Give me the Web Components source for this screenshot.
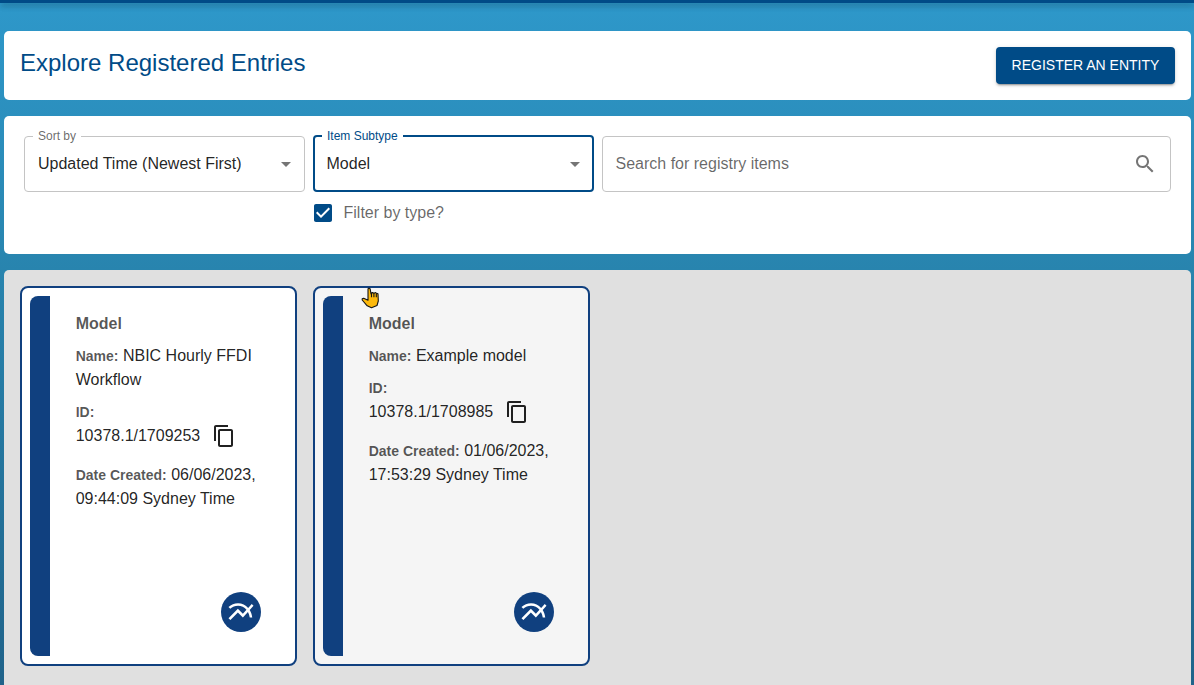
<!DOCTYPE html>
<html lang="en">
<head>
<meta charset="utf-8">
<title>Explore Registered Entries</title>
<style>
  html, body { margin: 0; height: 100%; overflow: hidden; }
  body { font: 16px/24px "Liberation Sans", Arial, sans-serif; color: rgba(0,0,0,.87); }
</style>
</head>
<body>
<registry-page>
  <page-heading heading="Explore Registered Entries" action="REGISTER AN ENTITY"></page-heading>
  <filter-panel>
    <outlined-field label="Sort by">Updated Time (Newest First)</outlined-field>
    <div>
      <outlined-field label="Item Subtype" focused>Model</outlined-field>
      <check-option>Filter by type?</check-option>
    </div>
    <outlined-field search>Search for registry items</outlined-field>
  </filter-panel>
  <result-grid>
    <entry-card kind="Model" name="NBIC Hourly FFDI Workflow" handle="10378.1/1709253" created="06/06/2023, 09:44:09 Sydney Time"></entry-card>
    <entry-card hovered kind="Model" name="Example model" handle="10378.1/1708985" created="01/06/2023, 17:53:29 Sydney Time"></entry-card>
  </result-grid>
</registry-page>
<hand-pointer></hand-pointer>
<script>
function define(tag, render) {
  customElements.define(tag, class extends HTMLElement {
    connectedCallback() {
      if (this.shadowRoot) return;
      const t = document.createElement('template');
      t.innerHTML = render(this);
      this.attachShadow({ mode: 'open' }).append(t.content.cloneNode(true));
    }
  });
}

define('registry-page', () => `
<style>
  :host { display: flex; flex-direction: column; height: 100vh; box-sizing: border-box; overflow: hidden;
    background: linear-gradient(#2e98ca 0, #2884ae 270px, #20638a 685px); }
  .bar { flex: none; height: 3px; background: #004b87;
    box-shadow: 0 2px 4px -1px rgba(0,0,0,.2), 0 4px 5px rgba(0,0,0,.14), 0 1px 10px rgba(0,0,0,.12); }
  main { display: flex; flex-direction: column; gap: 16px; padding: 28px 3px 0 4px; flex: 1; }
</style>
<div class="bar"></div><main><slot></slot></main>`);

define('page-heading', el => `
<style>
  :host { display: flex; justify-content: space-between; align-items: flex-start; height: 69px;
    box-sizing: border-box; padding: 16px; background: #fff; border-radius: 5px; flex: none; }
  h1 { margin: 0; font-size: 24px; line-height: 32px; font-weight: 400; color: #004b87; }
  button { font: 14px/24.5px "Liberation Sans", Arial, sans-serif; color: #fff; background: #004b87; border: 0;
    border-radius: 4px; width: 179px; height: 37px; padding: 0;
    box-shadow: 0 3px 1px -2px rgba(0,0,0,.2), 0 2px 2px rgba(0,0,0,.14), 0 1px 5px rgba(0,0,0,.12); }
</style>
<h1>${el.getAttribute('heading')}</h1><button>${el.getAttribute('action')}</button>`);

define('filter-panel', () => `
<style>
  :host { display: grid; grid-template-columns: 281px 281px 569px; column-gap: 8px; align-items: start;
    height: 138px; box-sizing: border-box; padding: 20px; background: #fff; border-radius: 5px; flex: none; }
</style><slot></slot>`);

define('outlined-field', el => {
  const label = el.getAttribute('label');
  const search = el.hasAttribute('search');
  return `
<style>
  :host { display: flex; align-items: center; box-sizing: border-box; height: 56px; position: relative;
    padding: 0 14px; justify-content: space-between; }
  :host([search]) { color: rgba(0,0,0,.6); }
  :host([search]), :host([focused]) { padding-left: 13.5px; }
  fieldset { position: absolute; inset: 0; margin: 0; padding: 0; border: 1px solid #c4c4c4; border-radius: 4px; }
  :host([focused]) fieldset { border: 2px solid #004b87; top: -1px; }
  label { position: absolute; left: 9px; top: -8px; padding: 0 5px; font-size: 12px; line-height: 16px;
    background: #fff; color: rgba(0,0,0,.6); }
  :host([focused]) label { color: #004b87; }
  svg { width: 24px; height: 24px; fill: #757575; position: relative; margin-right: -7px; }
  :host([search]) svg { margin-right: 0; }
</style>
<fieldset></fieldset>${label ? `<label>${label}</label>` : ''}<span><slot></slot></span>
<svg viewBox="0 0 24 24"><path d="${search
  ? 'M15.5 14h-.79l-.28-.27C15.41 12.59 16 11.11 16 9.5 16 5.91 13.09 3 9.5 3S3 5.91 3 9.5 5.91 16 9.5 16c1.61 0 3.09-.59 4.23-1.57l.27.28v.79l5 4.99L20.49 19l-4.99-5zm-6 0C7.01 14 5 11.99 5 9.5S7.01 5 9.5 5 14 7.01 14 9.5 11.99 14 9.5 14z'
  : 'M7 10l5 5 5-5z'}"/></svg>`;
});

define('check-option', () => `
<style>
  :host { display: flex; align-items: center; gap: 8.5px; margin-top: 9px; margin-left: -2px; color: rgba(0,0,0,.6); }
  svg { width: 24px; height: 24px; fill: #004b87; }
</style>
<svg viewBox="0 0 24 24"><path d="M19 3H5c-1.11 0-2 .9-2 2v14c0 1.1.89 2 2 2h14c1.11 0 2-.9 2-2V5c0-1.1-.89-2-2-2zm-9 14l-5-5 1.41-1.41L10 14.17l7.59-7.59L19 8l-9 9z"/></svg><span><slot></slot></span>`);

define('result-grid', () => `
<style>
  :host { display: flex; gap: 16px; align-items: flex-start; flex: 1; padding: 16px;
    background: #e0e0e0; border-radius: 5px 5px 0 0; }
</style><slot></slot>`);

define('entry-card', el => `
<style>
  :host { display: flex; box-sizing: border-box; width: 277px; height: 380px; padding: 8px;
    border: 2px solid #10407f; border-radius: 8px; background: #fff; }
  :host([hovered]) { background: #f5f5f5; }
  .stripe { width: 20px; flex: none; background: #10407f; border-radius: 8px 0 0 8px; }
  .body { flex: 1; display: flex; flex-direction: column; padding: 16px 20px 24px 25.7px; }
  h2, p { margin: 0 0 8px; }
  h2 { font-size: 16px; line-height: 24px; color: rgba(0,0,0,.66); }
  b { font-size: 14px; color: rgba(0,0,0,.66); }
  .id { display: flex; align-items: center; gap: 11.5px; margin-bottom: 15px; }
  .id svg { width: 24px; height: 24px; fill: rgba(0,0,0,.87); }
  .idlabel { margin: 0; }
  .kind { margin: auto 6px 0 auto; width: 40px; height: 40px; border-radius: 50%; background: #10407f;
    display: flex; align-items: center; justify-content: center; }
  .kind svg { width: 30px; height: 30px; fill: #fff; }
</style>
<div class="stripe"></div>
<div class="body">
  <h2>${el.getAttribute('kind')}</h2>
  <p><b>Name:</b> ${el.getAttribute('name')}</p>
  <p class="idlabel"><b>ID:</b></p>
  <div class="id"><span>${el.getAttribute('handle')}</span><svg viewBox="0 0 24 24"><path d="M16 1H4c-1.1 0-2 .9-2 2v14h2V3h12V1zm3 4H8c-1.1 0-2 .9-2 2v14c0 1.1.9 2 2 2h11c1.1 0 2-.9 2-2V7c0-1.1-.9-2-2-2zm0 16H8V7h11v14z"/></svg></div>
  <p><b>Date Created:</b> ${el.getAttribute('created')}</p>
  <div class="kind"><svg viewBox="0 0 24 24"><path d="m22 6.92-1.41-1.41-2.85 3.21C15.68 6.4 12.83 5 9.61 5 6.72 5 4.07 6.16 2 8l1.42 1.42C5.12 7.93 7.27 7 9.61 7c2.74 0 5.09 1.26 6.77 3.24l-2.88 3.24-4-4L2 16.99l1.5 1.5 6-6.01 4 4 4.05-4.55c.75 1.35 1.25 2.9 1.44 4.55H21c-.22-2.3-.95-4.39-2.04-6.14L22 6.92z"/></svg></div>
</div>`);

define('hand-pointer', () => `
<style>
  :host { display: block; position: absolute; left: 361px; top: 287px; width: 20px; height: 22px; }
  svg { display: block; }
</style>
<svg width="20" height="22" viewBox="0 0 20 22"><path d="M7 2.2C7 .8 9 .8 9.200 2.200L10 7l1.500-1.500 1.500.7 1.500-.6 1.200.8 1.300.3.3 7.300L16 18.500 10.500 20.800 6.200 18.800 1.200 13v-1.200l1.500-.6L7 13.200z" fill="#fdb90c" stroke="#151515" stroke-width="1.100" stroke-linejoin="round"/><path d="M10.500 5.500v4.700M12.900 6v4.200M15.300 6.300v3.900" stroke="#151515" stroke-width="1.100" fill="none"/></svg>`);
</script>
</body>
</html>
